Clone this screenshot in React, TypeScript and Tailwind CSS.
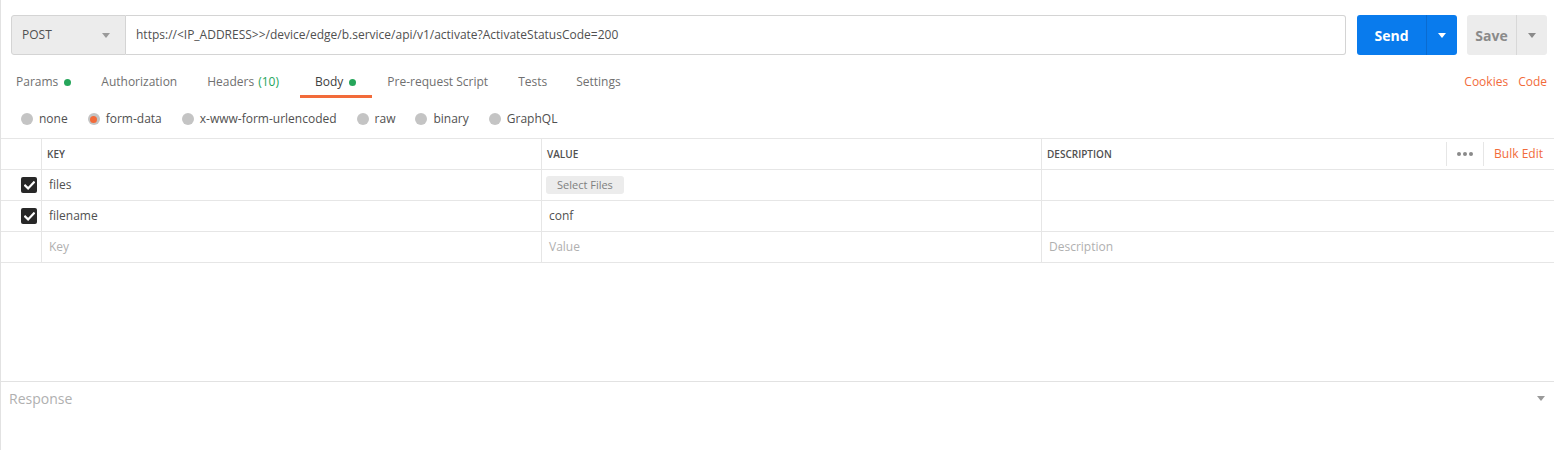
import React from "react";

const Caret = ({ className }: { className: string }) => (
  <svg width="8" height="5" viewBox="0 0 8 5" className={className}>
    <path d="M0 0 L8 0 L4 5 Z" fill="currentColor" />
  </svg>
);

const Dot = () => <span className="inline-block w-[7px] h-[7px] rounded-full bg-[#26a65b] ml-[6px]" />;

const Check = () => (
  <div className="w-[16px] h-[16px] rounded-[2px] bg-[#282828] flex items-center justify-center">
    <svg width="11" height="9" viewBox="0 0 11 9">
      <path d="M1.2 4.6 L4.1 7.4 L9.8 1.4" stroke="#fff" strokeWidth="2.2" fill="none" strokeLinecap="square" />
    </svg>
  </div>
);

const Radio = ({ label, active }: { label: string; active?: boolean }) => (
  <div className="flex items-center mr-[20px]">
    <span className="w-[12px] h-[12px] rounded-full bg-[#c4c4c4] flex items-center justify-center">
      {active && <span className="w-[7px] h-[7px] rounded-full bg-[#f26b3a]" />}
    </span>
    <span className="ml-[6px] text-[12px] text-[#505050]">{label}</span>
  </div>
);

export default function App() {
  const font = { fontFamily: '"Open Sans", "Liberation Sans", sans-serif' };
  const tabs: { label: React.ReactNode; active?: boolean; cls?: string }[] = [
    { label: <>Params<Dot /></>, cls: "pr-[15px]" },
    { label: "Authorization" },
    { label: <>Headers <span className="text-[#26a65b] ml-[4px]">(10)</span></>, cls: "pr-[21px]" },
    { label: <>Body<Dot /></>, active: true, cls: "pr-[16px]" },
    { label: "Pre-request Script" },
    { label: "Tests", cls: "pr-[14px]" },
    { label: "Settings" },
  ];
  return (
    <div style={font} className="w-full h-[450px] bg-white border-l border-[#e2e2e2] flex flex-col">
      {/* request bar */}
      <div className="flex h-[40px] mt-[15px] pl-[10px] pr-[7px]">
        <div className="w-[115px] bg-[#ececec] border border-[#d4d4d4] rounded-l-[3px] flex items-center justify-between pl-[10px] pr-[15px]">
          <span className="text-[12px] text-[#505050]">POST</span>
          <Caret className="text-[#9a9a9a]" />
        </div>
        <div className="flex-1 border border-l-0 border-[#d4d4d4] rounded-r-[3px] flex items-center pl-[10px]">
          <span className="text-[12px] text-[#505050]">https://&lt;IP_ADDRESS&gt;&gt;/device/edge/b.service/api/v1/activate?ActivateStatusCode=200</span>
        </div>
        <div className="w-[100px] ml-[11px] bg-[#097bed] rounded-[3px] flex">
          <div className="w-[70px] flex items-center justify-center text-white text-[14px] font-bold border-r border-[#0a6bd0]">Send</div>
          <div className="flex-1 flex items-center justify-center">
            <Caret className="text-white" />
          </div>
        </div>
        <div className="w-[80px] ml-[10px] bg-[#ececec] rounded-[3px] flex">
          <div className="w-[50px] flex items-center justify-center text-[#8a8a8a] text-[14px] font-bold border-r border-[#d8d8d8]">Save</div>
          <div className="flex-1 flex items-center justify-center">
            <Caret className="text-[#8a8a8a]" />
          </div>
        </div>
      </div>

      {/* tabs */}
      <div className="flex items-start justify-between mt-[14px] pr-[7px]">
        <div className="flex">
          {tabs.map((t, i) => (
            <div
              key={i}
              className={`h-[29px] pl-[15px] flex items-center text-[12px] border-b-[3px] ${t.cls ?? "pr-[15px]"} ${
                t.active ? "border-[#f26b3a] text-[#404040]" : "border-transparent text-[#707070]"
              }`}
            >
              {t.label}
            </div>
          ))}
        </div>
        <div className="h-[26px] flex items-center gap-[10px] text-[12px] text-[#f26b3a]">
          <span>Cookies</span>
          <span>Code</span>
        </div>
      </div>

      {/* body types */}
      <div className="h-[40px] pt-[2px] flex items-center pl-[20px]">
        <Radio label="none" />
        <Radio label="form-data" active />
        <Radio label="x-www-form-urlencoded" />
        <Radio label="raw" />
        <Radio label="binary" />
        <Radio label="GraphQL" />
      </div>

      {/* table */}
      <div className="border-t border-[#e6e6e6] text-[12px]">
        <div className="flex h-[31px] border-b border-[#e6e6e6]">
          <div className="w-[41px] border-r border-[#e6e6e6]" />
          <div className="w-[500px] border-r border-[#e6e6e6] flex items-center pl-[5px] text-[10px] font-semibold text-[#505050]">KEY</div>
          <div className="w-[500px] border-r border-[#e6e6e6] flex items-center pl-[5px] text-[10px] font-semibold text-[#505050]">VALUE</div>
          <div className="flex-1 flex items-center pl-[5px] text-[10px] font-semibold text-[#505050]">
            <span className="flex-1">DESCRIPTION</span>
            <div className="h-[24px] border-l border-[#e6e6e6] w-[37px] flex items-center justify-center gap-[2px]">
              <span className="w-[4px] h-[4px] rounded-full bg-[#8a8a8a]" />
              <span className="w-[4px] h-[4px] rounded-full bg-[#8a8a8a]" />
              <span className="w-[4px] h-[4px] rounded-full bg-[#8a8a8a]" />
            </div>
            <div className="h-[24px] border-l border-[#e6e6e6] flex items-center pl-[10px] pr-[11px] text-[12px] font-normal text-[#f26b3a]">Bulk Edit</div>
          </div>
        </div>
        <div className="flex h-[31px] border-b border-[#e6e6e6]">
          <div className="w-[41px] border-r border-[#e6e6e6] flex items-center pl-[20px]"><Check /></div>
          <div className="w-[500px] border-r border-[#e6e6e6] flex items-center pl-[7px] text-[#505050]">files</div>
          <div className="w-[500px] border-r border-[#e6e6e6] flex items-center pl-[4px]">
            <span className="h-[18px] px-[11px] rounded-[3px] bg-[#ececec] text-[11px] text-[#808080] flex items-center">Select Files</span>
          </div>
          <div className="flex-1" />
        </div>
        <div className="flex h-[31px] border-b border-[#e6e6e6]">
          <div className="w-[41px] border-r border-[#e6e6e6] flex items-center pl-[20px]"><Check /></div>
          <div className="w-[500px] border-r border-[#e6e6e6] flex items-center pl-[7px] text-[#505050]">filename</div>
          <div className="w-[500px] border-r border-[#e6e6e6] flex items-center pl-[7px] text-[#505050]">conf</div>
          <div className="flex-1" />
        </div>
        <div className="flex h-[31px] border-b border-[#e6e6e6]">
          <div className="w-[41px] border-r border-[#e6e6e6]" />
          <div className="w-[500px] border-r border-[#e6e6e6] flex items-center pl-[7px] text-[#b0b0b0]">Key</div>
          <div className="w-[500px] border-r border-[#e6e6e6] flex items-center pl-[7px] text-[#b0b0b0]">Value</div>
          <div className="flex-1 flex items-center pl-[7px] text-[#b0b0b0]">Description</div>
        </div>
      </div>

      <div className="h-[118px]" />

      {/* response */}
      <div className="border-t border-[#e2e2e2] h-[34px] flex items-center justify-between pl-[8px] pr-[9px]">
        <span className="text-[14px] text-[#b0b0b0]">Response</span>
        <Caret className="text-[#9a9a9a]" />
      </div>
    </div>
  );
}
